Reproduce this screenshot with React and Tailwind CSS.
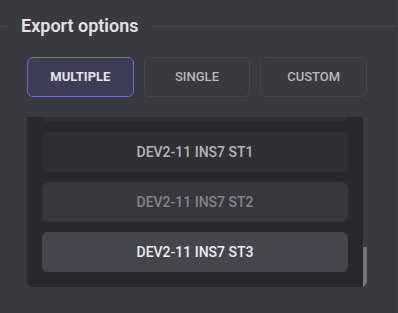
export default function App() {
  const items = [
    { label: "DEV2-11 INS7 ST0", cls: "bg-[#2f2f35] text-[#b4b4b8]" },
    { label: "DEV2-11 INS7 ST1", cls: "bg-[#2f2f35] text-[#b4b4b8]" },
    { label: "DEV2-11 INS7 ST2", cls: "bg-[#37373d] text-[#838388]" },
    { label: "DEV2-11 INS7 ST3", cls: "bg-[#45454e] text-[#ececf2]" },
  ];
  return (
    <div
      className="w-[398px] h-[313px] bg-[#393940] flex flex-col border-r border-[#42424a] overflow-hidden"
      style={{ fontFamily: "Roboto, 'Liberation Sans', sans-serif" }}
    >
      <div className="mt-[15px] h-[22px] flex items-center">
        <div className="w-[9px] h-px bg-[#46464e]" />
        <div className="px-[12px] text-[18px] leading-[22px] font-semibold text-[#e2e2e6]">
          Export options
        </div>
        <div className="flex-1 h-px bg-[#46464e]" />
      </div>
      <div className="mt-[20px] ml-[27px] w-[340px] grid grid-cols-3 gap-[10px]">
        <button className="h-[40px] rounded-[6px] border border-[#6f6dc9] bg-[#3e3d56] text-[13px] font-bold text-[#e4e4ea]">
          MULTIPLE
        </button>
        <button className="h-[40px] rounded-[6px] border border-[#46464e] text-[13px] font-medium text-[#b8b8bc]">
          SINGLE
        </button>
        <button className="h-[40px] rounded-[6px] border border-[#46464e] text-[13px] font-medium text-[#b8b8bc]">
          CUSTOM
        </button>
      </div>
      <div className="mt-[20px] ml-[27px] w-[340px] h-[170px] bg-[#28282d] rounded-b-[6px] relative overflow-hidden">
        <div className="-mt-[35px] pl-[15px] pr-[19px] flex flex-col gap-[10px]">
          {items.map((it, i) => (
            <div
              key={i}
              className={`h-[40px] rounded-[6px] flex items-center justify-center text-[14px] font-medium ${it.cls}`}
            >
              {it.label}
            </div>
          ))}
        </div>
        <div className="absolute right-0 top-0 w-[4px] h-[170px] bg-[#3c3c44]">
          <div className="absolute bottom-0 left-0 w-[4px] h-[40px] bg-[#76757e]" />
        </div>
      </div>
    </div>
  );
}
